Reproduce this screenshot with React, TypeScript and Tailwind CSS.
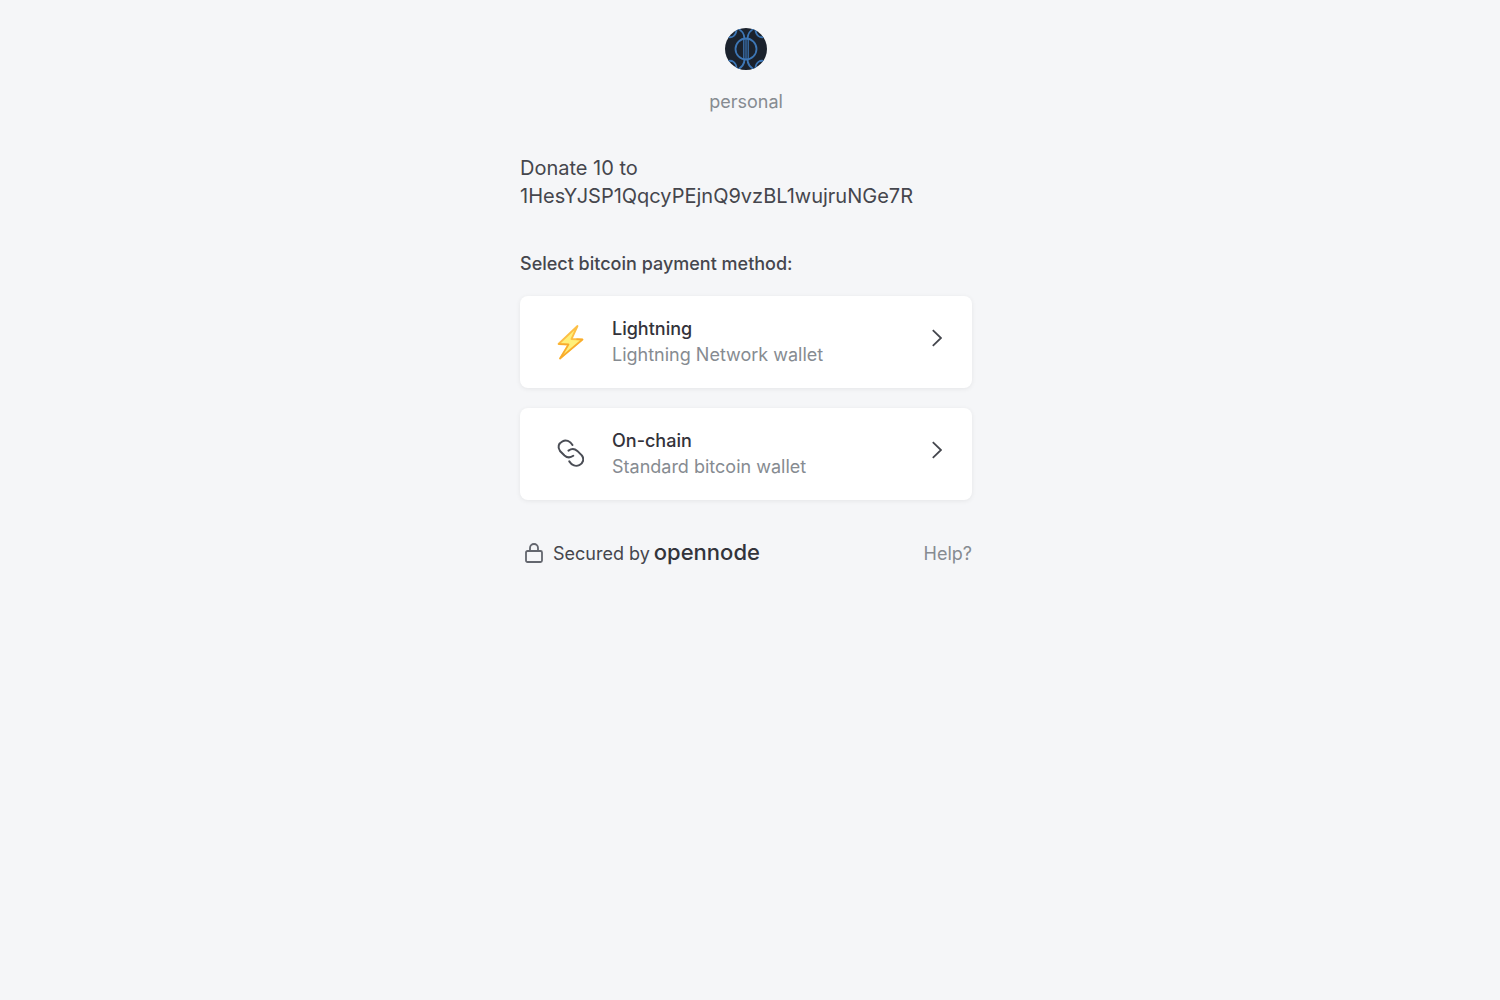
import type { ReactNode } from "react";

function AvatarLogo() {
  return (
    <svg viewBox="0 0 42 42" className="size-[42px]" aria-hidden="true">
      <defs>
        <clipPath id="avatar">
          <circle cx="21" cy="21" r="21" />
        </clipPath>
      </defs>
      <g clipPath="url(#avatar)">
        <rect width="42" height="42" fill="#1b222d" />
        <g fill="none" stroke="#3d76b5" strokeWidth="1.8">
          <circle cx="21" cy="21" r="10.5" />
          <path d="M18.8 11v20M21 10.5v21M23.2 11v20" strokeWidth="1.2" />
          <path d="M11 0C17 2 19.500 5 19.500 11M31 0C25 2 22.500 5 22.500 11" />
          <path d="M11 42C17 40 19.500 37 19.500 31M31 42C25 40 22.500 37 22.500 31" />
          <path d="M3 9C7 10 11 8 11.500 2M39 9C35 10 31 8 30.500 2" />
          <path d="M3 33C7 32 11 34 11.500 40M39 33C35 32 31 34 30.500 40" />
        </g>
      </g>
    </svg>
  );
}

function LightningIcon() {
  return (
    <svg viewBox="0 0 28 36" className="h-9 w-7" aria-hidden="true">
      <path
        d="M21.500 2 2.500 20l10 .5L4 34.500 26.500 15.500l-11-.5Z"
        fill="#fff07a"
        stroke="#fdbf45"
        strokeWidth="1.8"
        strokeLinejoin="round"
      />
      <path
        d="M2.500 20l10 .5L4 34.500 26.500 15.500l-6-.3"
        fill="none"
        stroke="#f9ac2c"
        strokeWidth="1.4"
        strokeLinejoin="round"
      />
    </svg>
  );
}

function ChainIcon() {
  const link = "M16.500 6C14 2 10 .7 6.500 2.300 2.500 4.200 1.300 8.500 4 12l4.500 4.500c2.500 2.200 6 2.300 8.800.3";

  return (
    <svg
      viewBox="0 0 28 28"
      className="mb-[2px] size-7"
      fill="none"
      stroke="#4a4d55"
      strokeWidth="2"
      strokeLinecap="round"
      aria-hidden="true"
    >
      <path d={link} />
      <path d={link} transform="rotate(180 14.9 14.2)" />
    </svg>
  );
}

function ChevronIcon() {
  return (
    <svg
      viewBox="0 0 10 18"
      className="mb-2 h-[18px] w-[10px]"
      fill="none"
      stroke="#44464d"
      strokeWidth="1.8"
      aria-hidden="true"
    >
      <path d="M.8 1.200 9 9 .8 16.800" />
    </svg>
  );
}

function LockIcon() {
  return (
    <svg
      viewBox="0 0 18 20"
      className="h-5 w-[18px] self-center"
      fill="none"
      stroke="#63666e"
      strokeWidth="1.8"
      aria-hidden="true"
    >
      <rect x="1" y="8" width="16" height="11" rx="1.5" />
      <path d="M5 8V5a4 4 0 0 1 8 0v3" />
    </svg>
  );
}

type MethodProps = {
  icon: ReactNode;
  name: string;
  detail: string;
};

function PaymentMethod({ icon, name, detail }: MethodProps) {
  return (
    <button
      type="button"
      className="flex w-full items-center rounded-lg bg-white py-5 pr-[30px] pl-9 text-left shadow-[0_1px_5px_rgba(0,0,0,0.07)]"
    >
      {icon}
      <span className="ml-7 flex-1 leading-[26px]">
        <span className="block font-medium text-[#33323a]">{name}</span>
        <span className="block text-[#868b91]">{detail}</span>
      </span>
      <ChevronIcon />
    </button>
  );
}

export default function App() {
  return (
    <div className="min-h-screen bg-[#f5f6f8] pr-2 font-['Inter',sans-serif] text-lg text-[#45464d]">
      <main className="mx-auto max-w-[452px] pt-7">
        <header className="flex flex-col items-center gap-[18px]">
          <AvatarLogo />
          <p className="leading-7 text-[#868b91]">personal</p>
        </header>

        <h1 className="mt-[38px] text-xl leading-7 break-words">
          Donate 10 to 1HesYJSP1QqcyPEjnQ9vzBL1wujruNGe7R
        </h1>

        <h2 className="mt-10 leading-7 font-medium">Select bitcoin payment method:</h2>

        <div className="mt-[18px] flex flex-col gap-5">
          <PaymentMethod
            icon={<LightningIcon />}
            name="Lightning"
            detail="Lightning Network wallet"
          />
          <PaymentMethod
            icon={<ChainIcon />}
            name="On-chain"
            detail="Standard bitcoin wallet"
          />
        </div>

        <footer className="mt-[38px] flex items-baseline justify-between leading-7">
          <div className="flex items-baseline pl-[5px]">
            <LockIcon />
            <span className="ml-[10px]">Secured by</span>
            <span className="ml-1 text-[22px] leading-7 font-medium text-[#33343b]">
              opennode
            </span>
          </div>
          <a href="#help" className="text-[#868b91]">
            Help?
          </a>
        </footer>
      </main>
    </div>
  );
}
